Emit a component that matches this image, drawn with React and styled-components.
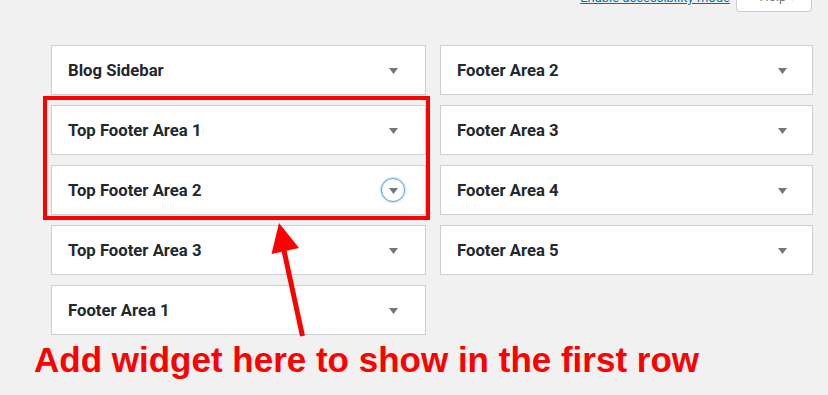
import React from "react";
import styled, { createGlobalStyle } from "styled-components";

const GlobalStyle = createGlobalStyle`
  html, body {
    margin: 0;
    padding: 0;
    background: #f1f1f1;
    font-family: Roboto, "Noto Sans", sans-serif;
    overflow: hidden;
  }
`;

const Page = styled.div`
  position: relative;
  width: 828px;
  height: 395px;
  overflow: hidden;
`;

const ScreenMeta = styled.div`
  display: flex;
  justify-content: flex-end;
  align-items: flex-end;
  gap: 6px;
  margin-top: -18px;
  padding-right: 16px;
`;

const MetaLink = styled.a`
  font-size: 13px;
  line-height: 22px;
  color: #0073aa;
  text-decoration: underline;
  margin-bottom: 3px;
`;

const HelpButton = styled.button`
  width: 76px;
  height: 30px;
  background: #fff;
  border: 1px solid #ccc;
  border-top: none;
  border-radius: 0 0 4px 4px;
  font-family: Roboto, sans-serif;
  font-size: 13px;
  color: #72777c;
  padding: 0 0 0 8px;
  text-align: center;
`;

const Columns = styled.div`
  display: grid;
  grid-template-columns: 375px 373px;
  column-gap: 14px;
  align-items: start;
  padding: 33px 0 0 51px;
`;

const Column = styled.div`
  display: flex;
  flex-direction: column;
  gap: 10px;
`;

const Area = styled.div`
  box-sizing: border-box;
  height: 50px;
  display: flex;
  align-items: center;
  justify-content: space-between;
  background: #fff;
  border: 1px solid #ccd0d4;
  padding: 0 ${(p) => p.$right}px 0 16px;
`;

const Title = styled.h2`
  margin: 0;
  font-size: 16.7px;
  font-weight: 700;
  color: #23282d;
`;

const Toggle = styled.span`
  box-sizing: border-box;
  width: 24px;
  height: 24px;
  display: flex;
  align-items: center;
  justify-content: center;
  border-radius: 50%;
  border: 1px solid ${(p) => (p.$focus ? "#5b9dd9" : "transparent")};
  box-shadow: ${(p) => (p.$focus ? "0 0 2px rgba(30,140,190,.8)" : "none")};
  padding-top: 1px;
`;

const Highlight = styled.div`
  position: absolute;
  left: 43px;
  top: 96px;
  width: 387px;
  height: 124px;
  box-sizing: border-box;
  border: 4px solid #ff0000;
  pointer-events: none;
`;

const Arrow = styled.svg`
  position: absolute;
  left: 0;
  top: 0;
  pointer-events: none;
`;

const Note = styled.div`
  position: absolute;
  left: 34px;
  top: 340px;
  font-family: "Liberation Sans Narrow", "Liberation Sans", Arial, sans-serif;
  font-weight: 700;
  font-size: 35px;
  line-height: 40px;
  color: #ff0000;
  white-space: nowrap;
`;

const Caret = () => (
  <svg width="9" height="6" viewBox="0 0 9 6">
    <path d="M0 0 H9 L4.5 6 Z" fill="#72777c" />
  </svg>
);

const left = [
  "Blog Sidebar",
  "Top Footer Area 1",
  "Top Footer Area 2",
  "Top Footer Area 3",
  "Footer Area 1",
];
const right = ["Footer Area 2", "Footer Area 3", "Footer Area 4", "Footer Area 5"];

export default function App() {
  return (
    <Page>
      <GlobalStyle />
      <ScreenMeta>
        <MetaLink href="#">Enable accessibility mode</MetaLink>
        <HelpButton>Help ▾</HelpButton>
      </ScreenMeta>
      <Columns>
        <Column>
          {left.map((name) => (
            <Area key={name} $right={20}>
              <Title>{name}</Title>
              <Toggle $focus={name === "Top Footer Area 2"}>
                <Caret />
              </Toggle>
            </Area>
          ))}
        </Column>
        <Column>
          {right.map((name) => (
            <Area key={name} $right={18}>
              <Title>{name}</Title>
              <Toggle>
                <Caret />
              </Toggle>
            </Area>
          ))}
        </Column>
      </Columns>
      <Highlight />
      <Arrow width="828" height="395">
        <line x1="302.5" y1="336" x2="283" y2="246" stroke="#ff0000" strokeWidth="5" />
        <polygon points="279,223 271.5,254 299,248" fill="#ff0000" />
      </Arrow>
      <Note>Add widget here to show in the first row</Note>
    </Page>
  );
}
